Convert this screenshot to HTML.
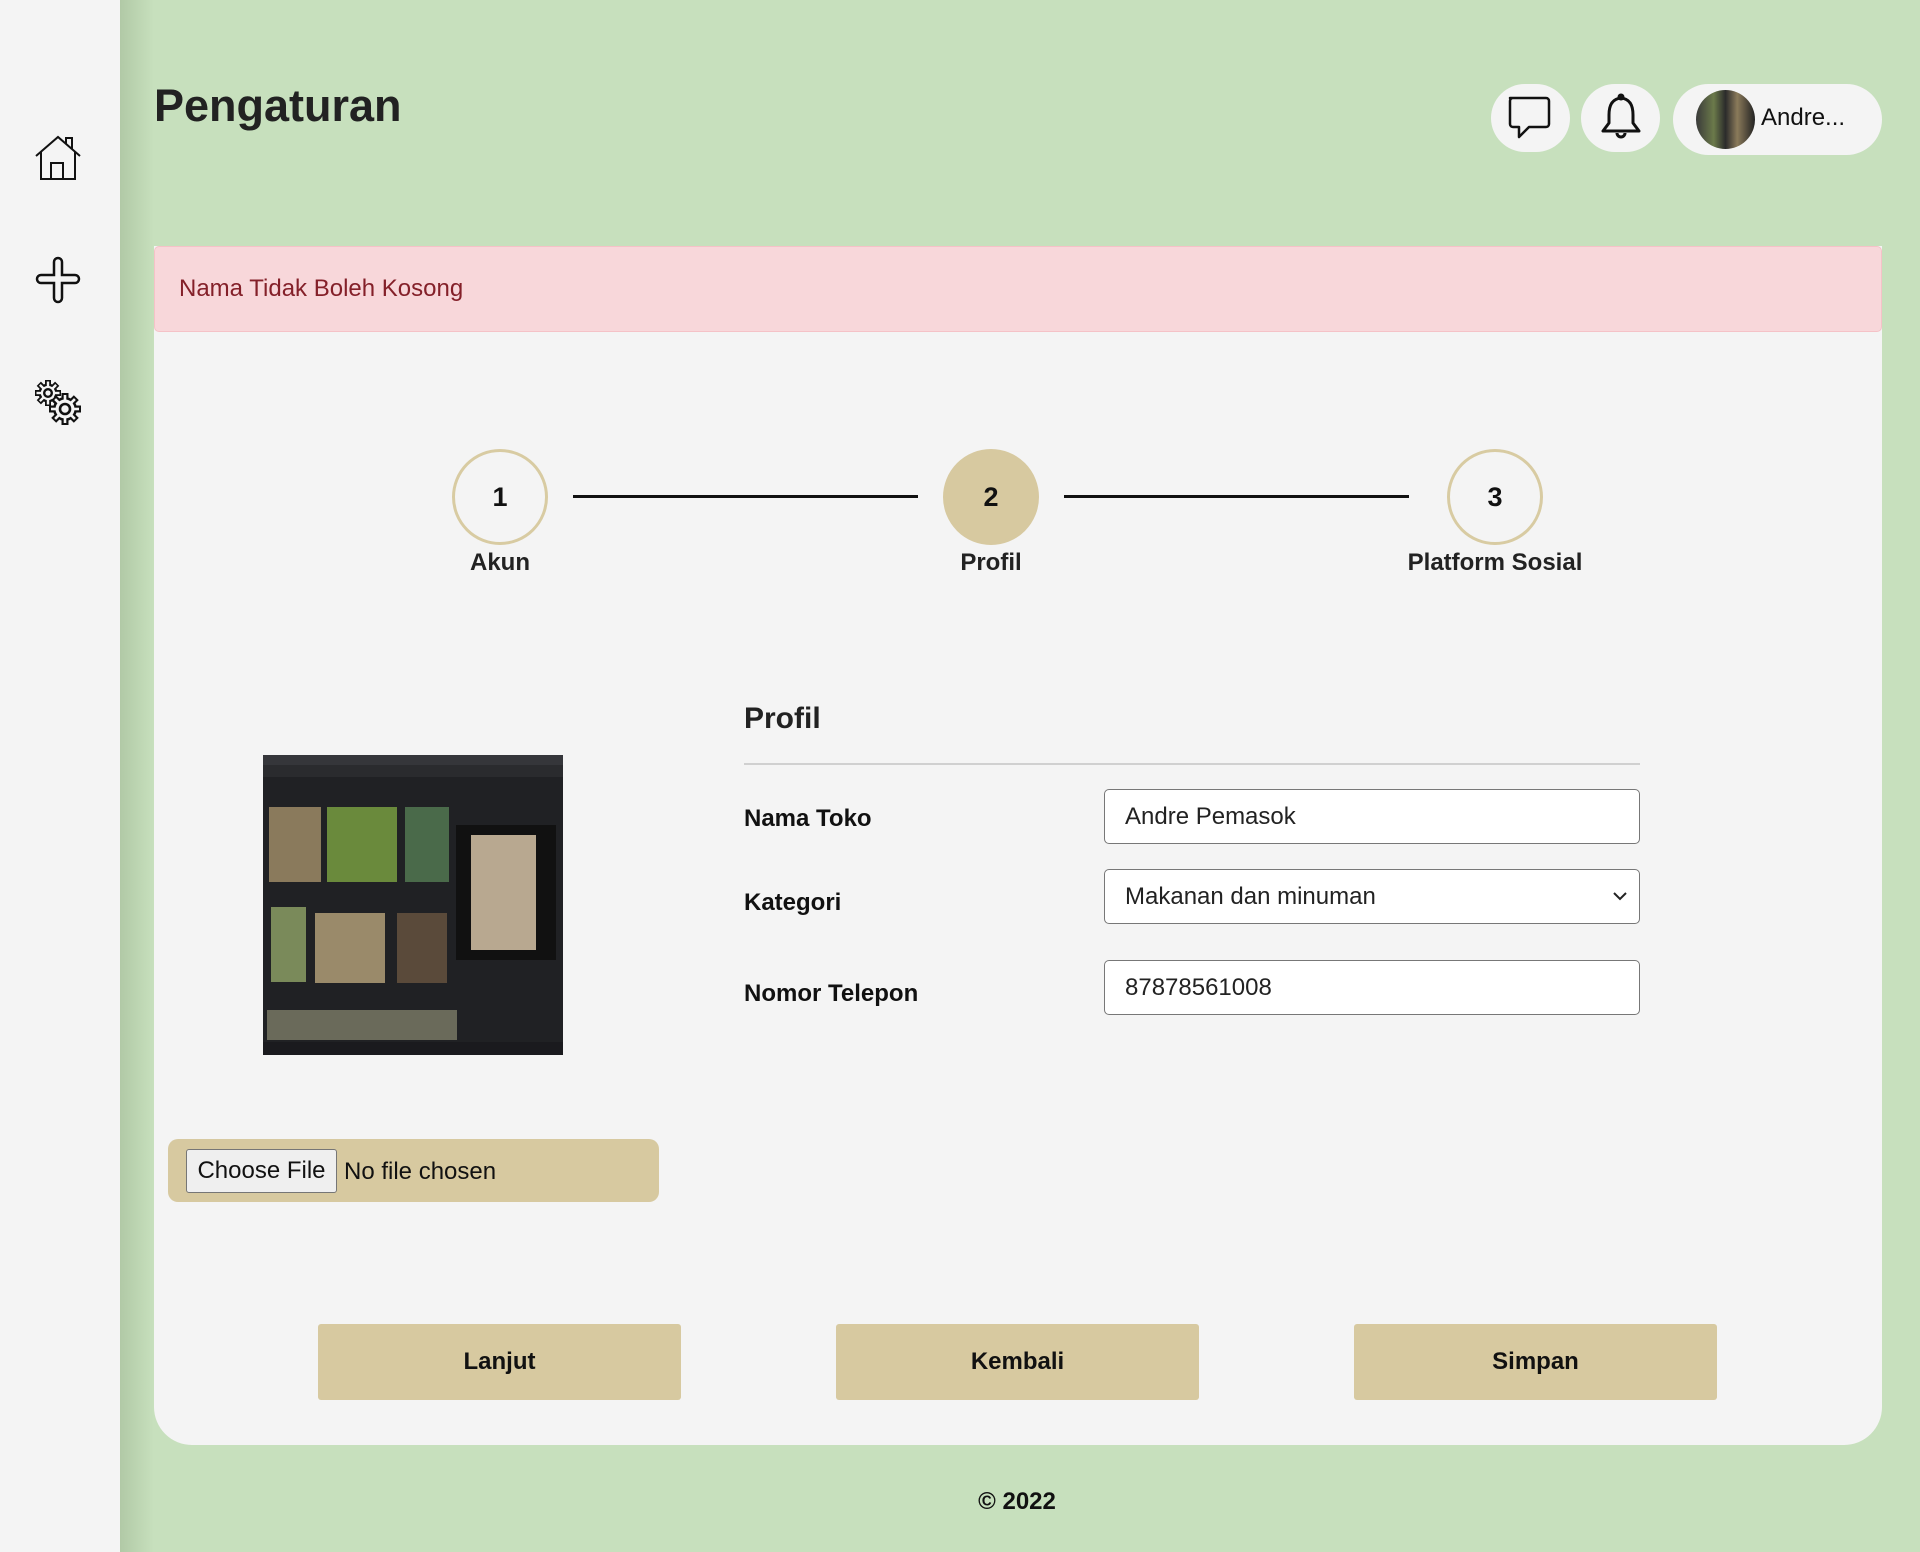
<!DOCTYPE html>
<html><head><meta charset="utf-8"><style>
*{box-sizing:border-box;margin:0;padding:0}
body{width:1920px;height:1552px;background:#c7e0bd;font-family:"Liberation Sans",Arial,sans-serif;position:relative;overflow:hidden;color:#212529}
.side{position:absolute;left:0;top:0;width:120px;height:1552px;background:#f4f4f4}
.shadow{position:absolute;left:120px;top:0;width:34px;height:1552px;background:linear-gradient(90deg,#b1c9a6,#c7e0bd)}
.abs{position:absolute}
h1{position:absolute;left:154px;top:80px;font-size:45px;font-weight:bold;color:#222}
.pill{position:absolute;background:#f4f4f4;border-radius:40px}
.card{position:absolute;left:154px;top:246px;width:1728px;height:1199px;background:#f4f4f4;border-radius:0 0 38px 38px}
.alert{position:absolute;left:154px;top:246px;width:1728px;height:86px;background:#f8d7da;border:1px solid #f5c2c7;border-radius:5px;color:#842029;font-size:24px;padding:28px 24px}
.circ{position:absolute;width:96px;height:96px;border-radius:50%;border:3px solid #d8cba2;text-align:center;line-height:90px;font-weight:bold;font-size:27px;color:#111}
.line{position:absolute;height:3px;background:#111;top:495px}
.lab{position:absolute;font-weight:bold;font-size:24px;color:#222;text-align:center;width:300px;top:549px}
.fl{position:absolute;left:744px;font-weight:bold;font-size:24px;color:#111}
.inp{position:absolute;left:1104px;width:536px;height:55px;border:1px solid #777;border-radius:5px;background:#fff;font-size:24px;padding-left:20px;line-height:53px;color:#222}
.btn{position:absolute;top:1324px;width:363px;height:76px;background:#d7c9a0;border-radius:3px;text-align:center;line-height:76px;font-weight:bold;font-size:24px;color:#111}
</style></head><body>
<div class="side"></div><div class="shadow"></div>
<svg class="abs" style="left:34px;top:134px" width="48" height="48" viewBox="0 0 48 48" fill="none" stroke="#111" stroke-width="2"><path d="M2 22 L24 3 L46 22"/><path d="M32 10 V4 H38 V15"/><path d="M7 18 V45 H41 V18"/><path d="M17 45 V29 H29 V45"/></svg>
<svg class="abs" style="left:34px;top:256px" width="48" height="48" viewBox="0 0 48 48" fill="none" stroke="#111" stroke-width="2.5"><path d="M20 6 a4 4 0 0 1 8 0 V19 H41 a4 4 0 0 1 0 8 H28 V42 a4 4 0 0 1 -8 0 V27 H7 a4 4 0 0 1 0 -8 H20 Z"/></svg>
<svg class="abs" style="left:34px;top:378px" width="50" height="50" viewBox="0 0 50 50">
<g transform="translate(14,15)">
<g fill="#111"><rect x="-3" y="-13" width="6" height="26"/><rect x="-3" y="-13" width="6" height="26" transform="rotate(45)"/><rect x="-3" y="-13" width="6" height="26" transform="rotate(90)"/><rect x="-3" y="-13" width="6" height="26" transform="rotate(135)"/></g>
<circle r="9.5" fill="#111"/><circle r="7" fill="#f4f4f4"/><circle r="3.8" fill="none" stroke="#111" stroke-width="2.4"/>
<g fill="#f4f4f4"><rect x="-1.2" y="-11.5" width="2.4" height="23"/><rect x="-1.2" y="-11.5" width="2.4" height="23" transform="rotate(45)"/><rect x="-1.2" y="-11.5" width="2.4" height="23" transform="rotate(90)"/><rect x="-1.2" y="-11.5" width="2.4" height="23" transform="rotate(135)"/></g>
<circle r="7" fill="#f4f4f4"/><circle r="3.8" fill="none" stroke="#111" stroke-width="2.4"/>
</g>
<g transform="translate(31,31)">
<g fill="#111"><rect x="-3.5" y="-16" width="7" height="32"/><rect x="-3.5" y="-16" width="7" height="32" transform="rotate(45)"/><rect x="-3.5" y="-16" width="7" height="32" transform="rotate(90)"/><rect x="-3.5" y="-16" width="7" height="32" transform="rotate(135)"/></g>
<circle r="12" fill="#111"/>
<g fill="#f4f4f4"><rect x="-1.3" y="-14" width="2.6" height="28"/><rect x="-1.3" y="-14" width="2.6" height="28" transform="rotate(45)"/><rect x="-1.3" y="-14" width="2.6" height="28" transform="rotate(90)"/><rect x="-1.3" y="-14" width="2.6" height="28" transform="rotate(135)"/></g>
<circle r="9.5" fill="#f4f4f4"/><circle r="5" fill="none" stroke="#111" stroke-width="2.6"/>
</g>
</svg>
<h1>Pengaturan</h1>
<div class="pill" style="left:1491px;top:84px;width:79px;height:68px"></div>
<svg class="abs" style="left:1506px;top:95px" width="46" height="46" viewBox="0 0 46 46" fill="none" stroke="#111" stroke-width="2.5"><path d="M4 3 H40 a3 3 0 0 1 3 3 V29 a3 3 0 0 1 -3 3 H23 L13 42 V32 H7 a3 3 0 0 1 -3 -3 V6 a3 3 0 0 1 3 -3 Z" stroke-linejoin="round"/></svg>
<div class="pill" style="left:1581px;top:84px;width:79px;height:68px"></div>
<svg class="abs" style="left:1599px;top:93px" width="44" height="50" viewBox="0 0 44 50" fill="none" stroke="#111" stroke-width="3"><path d="M22 5 C12 6 10 14 10 22 V30 L4 38 H40 L34 30 V22 C34 14 32 6 22 5 Z" stroke-linejoin="round"/><circle cx="22" cy="4" r="2"/><path d="M18 40 a4 4 0 0 0 8 0"/></svg>
<div class="pill" style="left:1673px;top:84px;width:209px;height:71px"></div>
<div class="abs" style="left:1696px;top:90px;width:59px;height:59px;border-radius:50%;background:linear-gradient(90deg,#3a3a3a,#6b7a4a 30%,#2b2b2b 50%,#8a7a5a 70%,#222)"></div>
<div class="abs" style="left:1761px;top:104px;font-size:24px;color:#111">Andre...</div>
<div class="card"></div>
<div class="alert">Nama Tidak Boleh Kosong</div>
<div class="circ" style="left:452px;top:449px">1</div>
<div class="circ" style="left:943px;top:449px;background:#d7c9a0;border-color:#d7c9a0">2</div>
<div class="circ" style="left:1447px;top:449px">3</div>
<div class="line" style="left:573px;width:345px"></div>
<div class="line" style="left:1064px;width:345px"></div>
<div class="lab" style="left:350px">Akun</div>
<div class="lab" style="left:841px">Profil</div>
<div class="lab" style="left:1345px">Platform Sosial</div>
<div class="abs" style="left:744px;top:702px;font-size:30px;font-weight:bold;color:#222">Profil</div>
<div class="abs" style="left:744px;top:763px;width:896px;height:2px;background:#d0d0d0"></div>
<div class="fl" style="top:805px">Nama Toko</div>
<div class="fl" style="top:889px">Kategori</div>
<div class="fl" style="top:980px">Nomor Telepon</div>
<div class="inp" style="top:789px">Andre Pemasok</div>
<div class="inp" style="top:869px">Makanan dan minuman<svg style="position:absolute;right:12px;top:21px" width="14" height="10" viewBox="0 0 14 10" fill="none" stroke="#222" stroke-width="2"><path d="M1 2 L7 8 L13 2"/></svg></div>
<div class="inp" style="top:960px">87878561008</div>
<div class="abs" style="left:263px;top:755px;width:300px;height:300px;background:#202124;overflow:hidden">
<div class="abs" style="left:0;top:0;width:300px;height:10px;background:#35363a"></div>
<div class="abs" style="left:0;top:10px;width:300px;height:12px;background:#2a2b2e"></div>
<div class="abs" style="left:6px;top:52px;width:52px;height:75px;background:#8a7a5c"></div>
<div class="abs" style="left:64px;top:52px;width:70px;height:75px;background:#6a8a3c"></div>
<div class="abs" style="left:142px;top:52px;width:44px;height:75px;background:#4a6a4a"></div>
<div class="abs" style="left:8px;top:152px;width:35px;height:75px;background:#7a8a5a"></div>
<div class="abs" style="left:52px;top:158px;width:70px;height:70px;background:#9a8a6a"></div>
<div class="abs" style="left:134px;top:158px;width:50px;height:70px;background:#5a4a3a"></div>
<div class="abs" style="left:193px;top:70px;width:100px;height:135px;background:#111"></div>
<div class="abs" style="left:208px;top:80px;width:65px;height:115px;background:#b8a890"></div>
<div class="abs" style="left:4px;top:255px;width:190px;height:30px;background:#6a6a5a"></div>
<div class="abs" style="left:0;top:287px;width:300px;height:13px;background:#1a1a1e"></div>
</div>
<div class="abs" style="left:168px;top:1139px;width:491px;height:63px;background:#d7c9a0;border-radius:10px"></div>
<div class="abs" style="left:186px;top:1149px;width:151px;height:44px;background:#efefef;border:1px solid #767676;border-radius:3px;font-size:24px;line-height:42px;text-align:center;color:#111">Choose File</div>
<div class="abs" style="left:344px;top:1158px;font-size:24px;color:#111">No file chosen</div>
<div class="btn" style="left:318px">Lanjut</div>
<div class="btn" style="left:836px">Kembali</div>
<div class="btn" style="left:1354px">Simpan</div>
<div class="abs" style="left:917px;top:1488px;width:200px;text-align:center;font-weight:bold;font-size:24px;color:#111">© 2022</div>
</body></html>
